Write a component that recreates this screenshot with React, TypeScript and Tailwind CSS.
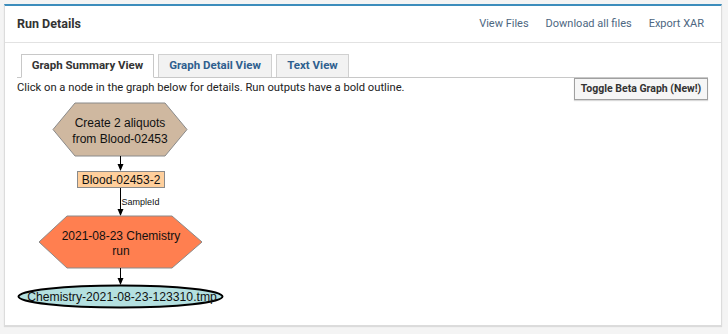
import React from "react";

function Arrow({ x, y1, y2 }: { x: number; y1: number; y2: number }) {
  return (
    <g>
      <line x1={x} y1={y1} x2={x} y2={y2 - 6} stroke="#000" strokeWidth={1} />
      <polygon points={`${x - 3},${y2 - 7} ${x + 3},${y2 - 7} ${x},${y2}`} fill="#000" />
    </g>
  );
}

function Graph() {
  const f = { fontFamily: '"Liberation Sans", Arial, sans-serif' };
  return (
    <svg width={220} height={212} viewBox="17 103 220 212" className="block" style={f}>
      <polygon
        points="75,106 165,106 187,132.5 165,159 75,159 53,132.5"
        fill="#cfb8a0"
        stroke="#8a8a8a"
        strokeWidth={1}
      />
      <text x={120} y={130} textAnchor="middle" fontSize={12} fill="#111">
        Create 2 aliquots
      </text>
      <text x={120} y={146} textAnchor="middle" fontSize={12} fill="#111">
        from Blood-02453
      </text>
      <Arrow x={120.5} y1={159} y2={174} />
      <rect x={77.5} y={174.5} width={87} height={16} fill="#ffcf9c" stroke="#8a8a8a" strokeWidth={1} />
      <text x={121} y={187} textAnchor="middle" fontSize={12} fill="#111">
        Blood-02453-2
      </text>
      <Arrow x={120.5} y1={191} y2={219} />
      <text x={121.5} y={208} fontSize={9} fill="#111">
        SampleId
      </text>
      <polygon
        points="67,219 172,219 202,245 172,271 67,271 39,245"
        fill="#ff7f50"
        stroke="#8a8a8a"
        strokeWidth={1}
      />
      <text x={121} y={243} textAnchor="middle" fontSize={12} fill="#111">
        2021-08-23 Chemistry
      </text>
      <text x={121} y={258} textAnchor="middle" fontSize={12} fill="#111">
        run
      </text>
      <Arrow x={120.5} y1={271} y2={288} />
      <ellipse cx={120.5} cy={299.5} rx={102} ry={11} fill="#b4e0e0" stroke="#000" strokeWidth={2} />
      <text x={122} y={304} textAnchor="middle" fontSize={12.2} fill="#111">
        Chemistry-2021-08-23-123310.tmp
      </text>
    </svg>
  );
}

export default function App() {
  return (
    <div
      className="w-[728px] h-[334px] bg-[#f4f4f4] pt-[4px] pl-[4px]"
      style={{ fontFamily: 'Roboto, "Liberation Sans", Arial, sans-serif' }}
    >
      <div className="w-[718px] h-[322px] bg-white border border-[#dcdcdc] border-t-2 border-t-[#3c8dbc] shadow-[0_1px_1px_rgba(0,0,0,0.1)]">
        <div className="h-[37px] flex items-center justify-between pl-3 pr-[17px] border-b border-[#e2e2e2]">
          <div className="text-[12.5px] font-bold text-[#333]">Run Details</div>
          <div className="flex gap-[17px] text-[11px] text-[#4d6781] whitespace-nowrap">
            <span>View Files</span>
            <span>Download all files</span>
            <span>Export XAR</span>
          </div>
        </div>
        <div className="pl-3 pr-[13px] pt-[11px]">
          <div className="flex gap-[4px] pl-[4px] border-b border-[#c8c8c8] h-[24px]">
            <div className="h-[24px] flex items-center justify-center whitespace-nowrap bg-white border border-[#c8c8c8] border-b-white text-[11.5px] font-bold text-[#333] w-[133px]">
              Graph Summary View
            </div>
            <div className="h-[23px] flex items-center justify-center whitespace-nowrap bg-[#f2f2f2] border border-[#d0d0d0] border-b-0 text-[11.5px] font-bold text-[#2f5f8f] w-[114px]">
              Graph Detail View
            </div>
            <div className="h-[23px] flex items-center justify-center whitespace-nowrap bg-[#f2f2f2] border border-[#d0d0d0] border-b-0 text-[11.5px] font-bold text-[#2f5f8f] w-[73px]">
              Text View
            </div>
          </div>
          <div className="flex justify-between items-start">
            <div className="text-[11.2px] text-[#222] mt-[3px] leading-[14px] whitespace-nowrap">
              Click on a node in the graph below for details. Run outputs have a bold outline.
            </div>
            <div className="w-[134px] h-[22px] flex items-center justify-center whitespace-nowrap border border-[#a0a0a0] bg-[#f6f6f6] text-[10.5px] font-bold text-[#333] shadow-[0_1px_1px_rgba(0,0,0,0.15)]">
              Toggle Beta Graph (New!)
            </div>
          </div>
          <Graph />
        </div>
      </div>
    </div>
  );
}
